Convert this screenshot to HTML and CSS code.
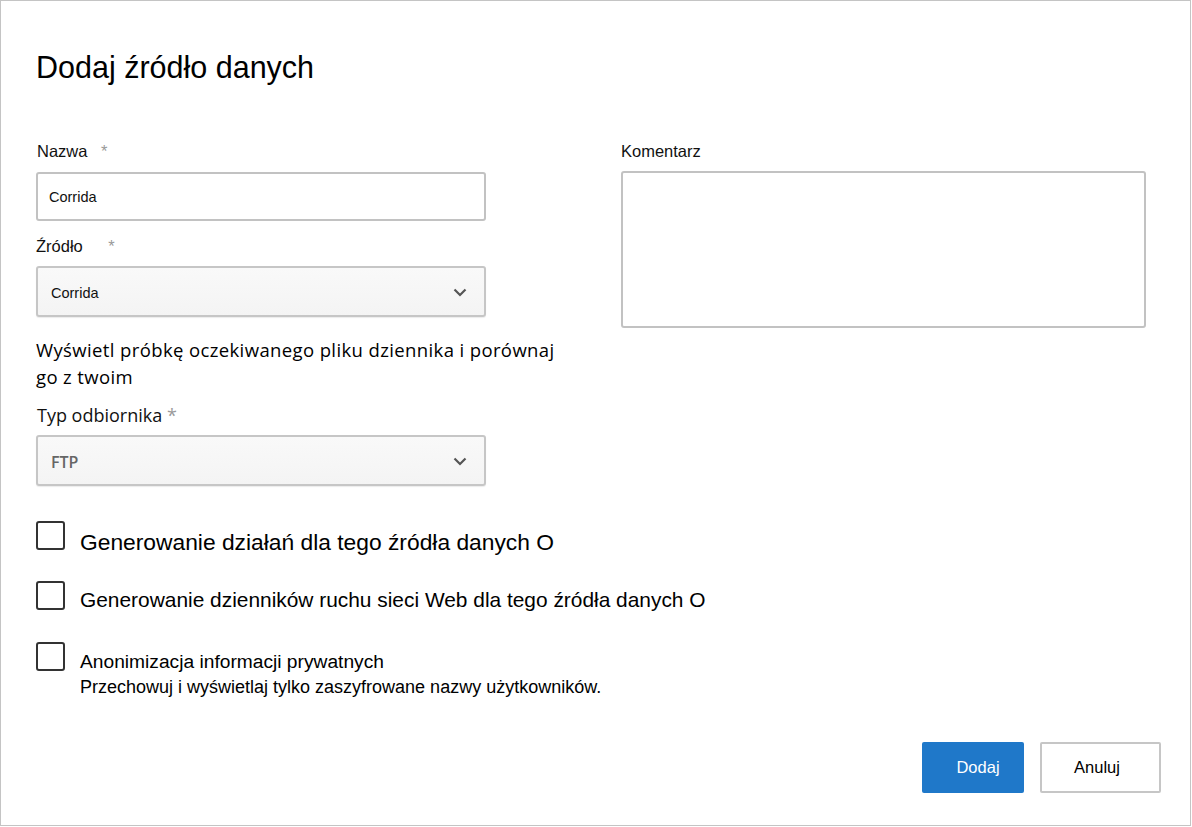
FILE: index.html
```html
<!DOCTYPE html>
<html lang="pl">
<head>
    <meta charset="UTF-8">
    <meta name="viewport" content="width=device-width, initial-scale=1.0">
    <title>Dodaj źródło danych</title>
    <link rel="stylesheet" href="styles.css">
</head>
<body>
    <div class="dialog">
        <h1 class="dialog-title">Dodaj źródło danych</h1>

        <div class="form-columns">
            <!-- lewa kolumna -->
            <div class="form-col form-col-left">
                <div class="form-group">
                    <label class="form-label form-label-name">Nazwa <span class="required">*</span></label>
                    <div class="form-control">Corrida</div>
                </div>

                <div class="form-group">
                    <label class="form-label form-label-source">Źródło <span class="required">*</span></label>
                    <div class="form-select">
                        <span class="select-value">Corrida</span>
                        <svg class="chevron" width="14" height="9" viewBox="0 0 14 9"><path d="M1.5 1.5 L7 7 L12.5 1.5" fill="none" stroke="#555" stroke-width="2.2"/></svg>
                    </div>
                </div>

                <p class="sample-link">Wyświetl próbkę oczekiwanego pliku dziennika i porównaj go z twoim</p>

                <div class="form-group">
                    <label class="form-label form-label-receiver">Typ odbiornika <span class="required">*</span></label>
                    <div class="form-select">
                        <span class="select-value select-value-bold">FTP</span>
                        <svg class="chevron" width="14" height="9" viewBox="0 0 14 9"><path d="M1.5 1.5 L7 7 L12.5 1.5" fill="none" stroke="#555" stroke-width="2.2"/></svg>
                    </div>
                </div>
            </div>

            <!-- prawa kolumna -->
            <div class="form-col form-col-right">
                <div class="form-group">
                    <label class="form-label form-label-comment">Komentarz</label>
                    <div class="form-textarea"></div>
                </div>
            </div>
        </div>

        <!-- opcje -->
        <div class="options">
            <div class="check-row">
                <span class="check-box"></span>
                <span class="check-label check-label-lg">Generowanie działań dla tego źródła danych O</span>
            </div>
            <div class="check-row">
                <span class="check-box"></span>
                <span class="check-label check-label-md">Generowanie dzienników ruchu sieci Web dla tego źródła danych O</span>
            </div>
            <div class="check-row check-row-last">
                <span class="check-box"></span>
                <div class="check-text">
                    <span class="check-label check-label-sm">Anonimizacja informacji prywatnych</span>
                    <span class="check-hint">Przechowuj i wyświetlaj tylko zaszyfrowane nazwy użytkowników.</span>
                </div>
            </div>
        </div>

        <div class="dialog-buttons">
            <button class="btn btn-primary">Dodaj</button>
            <button class="btn btn-secondary">Anuluj</button>
        </div>
    </div>
</body>
</html>
```

FILE: styles.css
```css
body {
    margin: 0;
    background-color: white;
    font-family: 'Liberation Sans', Arial, sans-serif;
    color: #111;
}

.dialog {
    width: 1191px;
    height: 826px;
    box-sizing: border-box;
    border: 1px solid #c4c4c4;
    padding: 48px 29px 32px 35px;
    display: flex;
    flex-direction: column;
}

.dialog-title {
    margin: 0;
    font-size: 30.5px;
    font-weight: normal;
    line-height: 36px;
    color: #000;
}

.form-columns {
    display: flex;
    gap: 135px;
    margin-top: 57px;
}

.form-col-left {
    width: 450px;
}

.form-col-right {
    width: 525px;
}

.form-label {
    display: block;
    font-size: 16.5px;
    line-height: 18px;
    margin-bottom: 12px;
}

.form-label-name {
    padding-left: 1px;
}

.required {
    color: #9a9a9a;
    margin-left: 9px;
}

.form-label-source {
    margin-top: 16px;
    margin-bottom: 11px;
}

.form-label-source .required {
    margin-left: 21px;
}

.form-label-comment {
    margin-bottom: 11px;
}

.form-control {
    height: 49px;
    box-sizing: border-box;
    border: 2px solid #c2c2c2;
    border-radius: 3px;
    padding: 0 11px;
    display: flex;
    align-items: center;
    font-size: 14.5px;
    background-color: white;
}

.form-select {
    height: 51px;
    box-sizing: border-box;
    border: 2px solid #c6c6c6;
    border-radius: 3px;
    padding: 2px 17px 0 13px;
    display: flex;
    align-items: center;
    justify-content: space-between;
    background: linear-gradient(#f9f9f9, #f4f4f4);
    box-shadow: 0 1px 1px rgba(0,0,0,0.08);
}

.select-value {
    font-size: 14.5px;
}

.select-value-bold {
    font-family: 'Open Sans', sans-serif;
    font-weight: 600;
    font-size: 16px;
    color: #666;
}

.sample-link {
    margin: 19px 0 0 0;
    font-family: 'Open Sans', sans-serif;
    font-size: 18.5px;
    letter-spacing: 0.38px;
    line-height: 27px;
    width: 540px;
    color: #000;
}

.form-label-receiver {
    font-family: 'Open Sans', sans-serif;
    font-size: 18px;
    line-height: 22px;
    margin-top: 14px;
    margin-bottom: 9px;
    padding-left: 1px;
}

.form-label-receiver .required {
    margin-left: 0;
}

.form-textarea {
    height: 157px;
    box-sizing: border-box;
    border: 2px solid #c2c2c2;
    border-radius: 3px;
    background-color: white;
}

/* opcje */
.options {
    margin-top: 35px;
    display: flex;
    flex-direction: column;
    gap: 31px;
}

.check-row {
    display: flex;
    align-items: flex-start;
    height: 29px;
}

.check-row-last {
    margin-top: 1px;
}

.check-box {
    width: 29px;
    height: 29px;
    box-sizing: border-box;
    border: 2px solid #333;
    border-radius: 3px;
    flex-shrink: 0;
    margin-right: 15px;
}

.check-label {
    color: #000;
}

.check-label-lg {
    font-size: 22.8px;
    line-height: 26px;
    margin-top: 8px;
}

.check-label-md {
    font-size: 20.9px;
    line-height: 24px;
    margin-top: 7px;
}

.check-text {
    display: flex;
    flex-direction: column;
    margin-top: 9px;
}

.check-label-sm {
    font-size: 19.2px;
    line-height: 22px;
}

.check-hint {
    font-size: 18px;
    line-height: 20px;
    margin-top: 4px;
    color: #000;
}

/* przyciski */
.dialog-buttons {
    margin-top: auto;
    align-self: flex-end;
    display: flex;
    gap: 16px;
}

.btn {
    height: 51px;
    box-sizing: border-box;
    font-family: 'Liberation Sans', Arial, sans-serif;
    font-size: 16.5px;
    border-radius: 2px;
    cursor: pointer;
}

.btn-primary {
    width: 102px;
    padding: 0 0 0 10px;
    background-color: #1f78c9;
    color: white;
    border: none;
}

.btn-secondary {
    width: 121px;
    padding: 0 7px 0 0;
    background-color: white;
    border: 2px solid #c6c6c6;
    color: #000;
}
```
